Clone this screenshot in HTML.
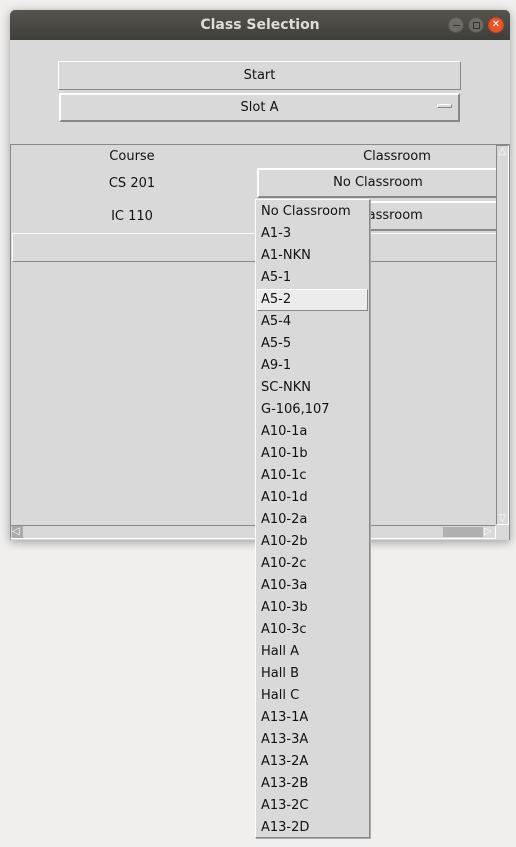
<!DOCTYPE html>
<html><head><meta charset="utf-8"><style>
*{box-sizing:border-box;margin:0;padding:0}
body{width:516px;height:847px;background:#f0efee;position:relative;overflow:hidden;font-family:"DejaVu Sans","Liberation Sans",sans-serif;font-size:13px;color:#111}
.win{position:absolute;left:10px;top:10px;width:500px;height:530px;background:#d9d9d9;box-shadow:0 2px 10px rgba(0,0,0,.35);border-radius:5px 5px 0 0;overflow:hidden}
.title{height:30px;background:linear-gradient(#57544e,#403e3a);color:#e0ddd8;font-weight:bold;font-size:14px;text-align:center;line-height:30px}
.tb{position:absolute;top:7px;width:16px;height:16px;border-radius:50%;background:#6e6c67;border:1px solid #55534f}
.abs{position:absolute;white-space:nowrap}
.btn{position:absolute;border:1px solid;border-color:#fff #888 #888 #fff;background:#d9d9d9;text-align:center}
.rb{position:absolute;border:2px solid;border-color:#fff #888 #888 #fff;background:#d9d9d9;text-align:center;white-space:nowrap}
.menu{position:absolute;left:255px;top:199px;width:115px;height:639px;background:#d9d9d9;border:1px solid;border-color:#fff #888 #888 #fff;box-shadow:1px 1px 0 #aaa;padding-top:1px}
.menu div{height:22px;line-height:22px;padding-left:5px;font-size:13px;color:#111}
.menu .sel{background:#ececec;border:1px solid;border-color:#fff #888 #888 #fff;margin:0 1px;padding-left:3px;line-height:20px}
</style></head><body>
<div class="win">
<div class="title">Class Selection</div>
<div class="tb" style="left:438px"><div style="position:absolute;left:4px;top:7px;width:7px;height:1px;background:#333"></div></div>
<div class="tb" style="left:458px"><div style="position:absolute;left:4px;top:4px;width:7px;height:7px;border:1px solid #333"></div></div>
<div class="tb" style="left:478px;background:#e5562b;border-color:#c84520;color:#fff;font-size:10px;line-height:14px;text-align:center">✕</div>
<div class="btn" style="left:48px;top:51px;width:403px;height:29px;line-height:27px">Start</div>
<div class="rb" style="left:49px;top:83px;width:401px;height:29px;line-height:25px">Slot A<div style="position:absolute;right:6px;top:9px;width:15px;height:4px;border:1px solid;border-color:#fff #888 #888 #fff"></div></div>
<div class="abs" style="left:0;top:134px;width:500px;height:396px;border:1px solid #888;border-bottom:none"></div>
<div class="abs" style="left:72px;top:139px;width:100px;text-align:center">Course</div>
<div class="abs" style="left:337px;top:139px;width:100px;text-align:center">Classroom</div>
<div class="abs" style="left:72px;top:166px;width:100px;text-align:center">CS 201</div>
<div class="abs" style="left:72px;top:199px;width:100px;text-align:center">IC 110</div>
<div class="rb" style="left:247px;top:158px;width:240px;height:30px;line-height:26px;border-right:none">No Classroom</div>
<div class="rb" style="left:247px;top:191px;width:240px;height:30px;line-height:26px;border-right:none">No Classroom</div>
<div class="abs" style="left:2px;top:223px;width:485px;height:29px;border:1px solid;border-color:#fff #888 #888 #fff;border-right:none"></div>
<div class="abs" style="left:486px;top:135px;width:13px;height:380px;border:1px solid;border-color:#888 #fff #fff #888;background:#d9d9d9"></div>
<div class="abs" style="left:487px;top:136px;width:11px;height:11px;color:#fff;font-size:10px;line-height:11px;text-align:center">△</div>
<div class="abs" style="left:487px;top:503px;width:11px;height:11px;color:#fff;font-size:10px;line-height:11px;text-align:center">▽</div>
<div class="abs" style="left:0;top:515px;width:486px;height:14px;border:1px solid;border-color:#888 #fff #fff #888;background:#d9d9d9"></div>
<div class="abs" style="left:433px;top:517px;width:40px;height:10px;background:#b0b0b0"></div>
<div class="abs" style="left:2px;top:516px;width:11px;height:12px;color:#fff;font-size:10px;line-height:12px;background:#aaa">◁</div>
<div class="abs" style="left:474px;top:516px;width:11px;height:12px;color:#fff;font-size:10px;line-height:12px">▷</div>
</div>
<div class="menu">
<div>No Classroom</div><div>A1-3</div><div>A1-NKN</div><div>A5-1</div><div class="sel">A5-2</div><div>A5-4</div><div>A5-5</div><div>A9-1</div><div>SC-NKN</div><div>G-106,107</div><div>A10-1a</div><div>A10-1b</div><div>A10-1c</div><div>A10-1d</div><div>A10-2a</div><div>A10-2b</div><div>A10-2c</div><div>A10-3a</div><div>A10-3b</div><div>A10-3c</div><div>Hall A</div><div>Hall B</div><div>Hall C</div><div>A13-1A</div><div>A13-3A</div><div>A13-2A</div><div>A13-2B</div><div>A13-2C</div><div>A13-2D</div>
</div>
</body></html>
